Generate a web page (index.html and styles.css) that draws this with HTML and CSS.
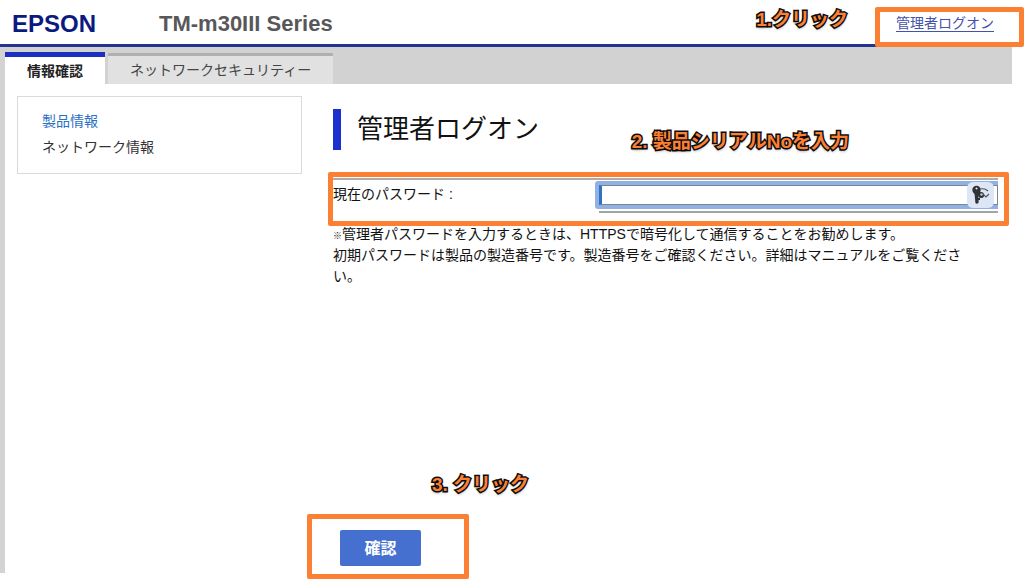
FILE: index.html
```html
<!DOCTYPE html>
<html lang="ja">
<head>
    <meta charset="UTF-8">
    <meta name="viewport" content="width=device-width, initial-scale=1.0">
    <title>TM-m30III Series</title>
    <link rel="stylesheet" href="styles.css">
</head>
<body>

    <header class="header">
        <div class="logo">EPSON</div>
        <div class="product">TM-m30III Series</div>
        <div class="logon">
            <a href="#logon">管理者ログオン</a>
            <span class="frame frame-logon"></span>
            <span class="step step-logon">1.クリック</span>
        </div>
    </header>

    <div class="wrapper">
        <nav class="tabs">
            <a class="tab active" href="#info">情報確認</a>
            <a class="tab" href="#security">ネットワークセキュリティー</a>
        </nav>

        <div class="content">
            <nav class="sidebar">
                <a class="current" href="#product">製品情報</a>
                <a href="#network">ネットワーク情報</a>
            </nav>

            <main class="main">
                <h1>管理者ログオン</h1>

                <form class="logon-form">
                    <div class="field">
                        <label for="password">現在のパスワード :</label>
                        <div class="field-value">
                            <input type="password" id="password">
                            <span class="key">
                                <svg width="21" height="20" viewBox="0 0 21 20">
                                    <path d="M6 6 L7 17" stroke="#303236" stroke-width="3.4" stroke-linecap="round"/>
                                    <path d="M8 14 L10 14" stroke="#303236" stroke-width="2"/>
                                    <circle cx="6.5" cy="5" r="4.2" fill="#303236"/>
                                    <circle cx="6.5" cy="3.6" r="1" fill="#e8eefa"/>
                                    <path d="M8 7 L13 12" stroke="#303236" stroke-width="3"/>
                                    <circle cx="11" cy="10" r="3" fill="#303236"/>
                                    <circle cx="11.5" cy="9.5" r="1.2" fill="#c8ccd4"/>
                                    <path d="M10 4 Q15 3 18 6 M13 9 L16 12 L19 9" fill="none" stroke="#55585e" stroke-width="1.2"/>
                                </svg>
                            </span>
                        </div>
                        <span class="frame frame-field"></span>
                        <span class="step step-field">2. 製品シリアルNoを入力</span>
                    </div>

                    <p class="note"><span class="mark">※</span>管理者パスワードを入力するときは、HTTPSで暗号化して通信することをお勧めします。<br>
                    初期パスワードは製品の製造番号です。製造番号をご確認ください。詳細はマニュアルをご覧ください。</p>

                    <div class="buttons">
                        <button type="button">確認</button>
                        <span class="frame frame-button"></span>
                        <span class="step step-button">3. クリック</span>
                    </div>
                </form>
            </main>
        </div>
    </div>

</body>
</html>
```
FILE: styles.css
```css
* {
    box-sizing: border-box;
}

body {
    margin: 0;
    padding: 0 12px 6px 0;
    min-height: 100vh;
    display: flex;
    flex-direction: column;
    overflow-x: hidden;
    background-color: #ffffff;
    color: #111111;
    font-family: "Liberation Sans", "Noto Sans CJK JP", sans-serif;
    font-size: 14px;
    line-height: 21px;
}

a {
    color: inherit;
    text-decoration: none;
}

/* Header */
.header {
    display: flex;
    align-items: center;
    height: 47px;
    padding: 2px 18px 0 12px;
    border-bottom: 3px solid #25348c;
}

.logo {
    width: 147px;
    color: #0b1a80;
    font-size: 24px;
    font-weight: bold;
}

.product {
    color: #58585a;
    font-size: 22px;
    font-weight: bold;
}

.logon {
    position: relative;
    margin-left: auto;
}

.logon a {
    color: #4552ab;
    text-decoration: underline;
    text-underline-offset: 3px;
}

/* Tabs */
.wrapper {
    flex: 1;
    display: flex;
    flex-direction: column;
    border-left: 5px solid #d3d3d5;
}

.tabs {
    display: flex;
    align-items: flex-end;
    gap: 3px;
    height: 37px;
    background-color: #d3d2d3;
}

.tab {
    height: 31px;
    padding: 4px 22px 0;
    border-top: 3px solid #b0afb3;
    background-color: #e1e1e1;
    color: #444444;
}

.tab.active {
    height: 32px;
    border-top: 5px solid #1c30c0;
    background-color: #ffffff;
    color: #222222;
    font-weight: bold;
}

/* Content */
.content {
    flex: 1;
    display: flex;
    align-items: stretch;
    gap: 31px;
    padding: 12px 14px 7px 12px;
}

.sidebar {
    align-self: flex-start;
    display: flex;
    flex-direction: column;
    gap: 5px;
    width: 285px;
    padding: 14px 24px 15px;
    border: 1px solid #dadada;
    color: #333333;
}

.sidebar .current {
    color: #2a6fc4;
}

.main {
    flex: 1;
    display: flex;
    flex-direction: column;
    padding-top: 13px;
}

h1 {
    margin: 0 0 28px;
    padding-left: 16px;
    border-left: 8px solid #1c30d0;
    font-size: 26px;
    font-weight: normal;
    line-height: 41px;
}

.logon-form {
    flex: 1;
    display: flex;
    flex-direction: column;
}

.field {
    position: relative;
    display: grid;
    grid-template-columns: 2fr 3fr;
    border-top: 2px solid #b0a9a8;
}

.field label {
    padding-top: 4px;
}

.field-value {
    position: relative;
    padding: 5px 0 6px;
    border-bottom: 2px solid #a3a3a8;
}

.field input {
    display: block;
    width: 100%;
    height: 20px;
    padding: 0 32px 0 4px;
    border: 1px solid #7d8595;
    border-left: 3px solid #2f73c2;
    border-radius: 0;
    outline: none;
    box-shadow: 0 0 0 4px #8fb2e2;
    clip-path: inset(-4px 0 -4px -4px round 3px 0 0 3px);
    font-size: 14px;
}

.key {
    position: absolute;
    top: 2px;
    right: 4px;
    width: 27px;
    height: 26px;
    padding: 3px;
    border-radius: 6px;
    background-color: #dde6f5;
}

.key svg {
    display: block;
}

.note {
    margin: 11px 0 0;
    padding-right: 22px;
}

.mark {
    font-size: 9px;
    font-weight: bold;
    line-height: 1;
}

.buttons {
    position: relative;
    align-self: flex-start;
    margin-top: auto;
    padding-left: 7px;
}

button {
    display: block;
    width: 81px;
    height: 36px;
    padding: 0 0 2px;
    border: none;
    border-radius: 2px;
    background-color: #4570cf;
    color: #ffffff;
    font-family: inherit;
    font-size: 16px;
    font-weight: bold;
}

/* Step guides drawn over the page */
.frame {
    position: absolute;
    border: 5px solid #fb8033;
    border-radius: 2px;
    pointer-events: none;
}

.frame-logon {
    top: -6px;
    left: -21px;
    width: 149px;
    height: 40px;
}

.frame-field {
    top: -8px;
    left: -5px;
    right: -11px;
    height: 54px;
}

.frame-button {
    top: -16px;
    left: -26px;
    width: 162px;
    height: 65px;
}

.step {
    position: absolute;
    color: #fb8033;
    font-size: 19px;
    font-weight: bold;
    line-height: 24px;
    white-space: nowrap;
    -webkit-text-stroke: 3px #0d0d0d;
    paint-order: stroke fill;
    text-shadow: 0 2px 3px rgba(0, 0, 0, 0.4);
}

.step-logon {
    top: -5px;
    right: 146px;
}

.step-field {
    top: -50px;
    right: 149px;
}

.step-button {
    top: -57px;
    left: 99px;
}
```
